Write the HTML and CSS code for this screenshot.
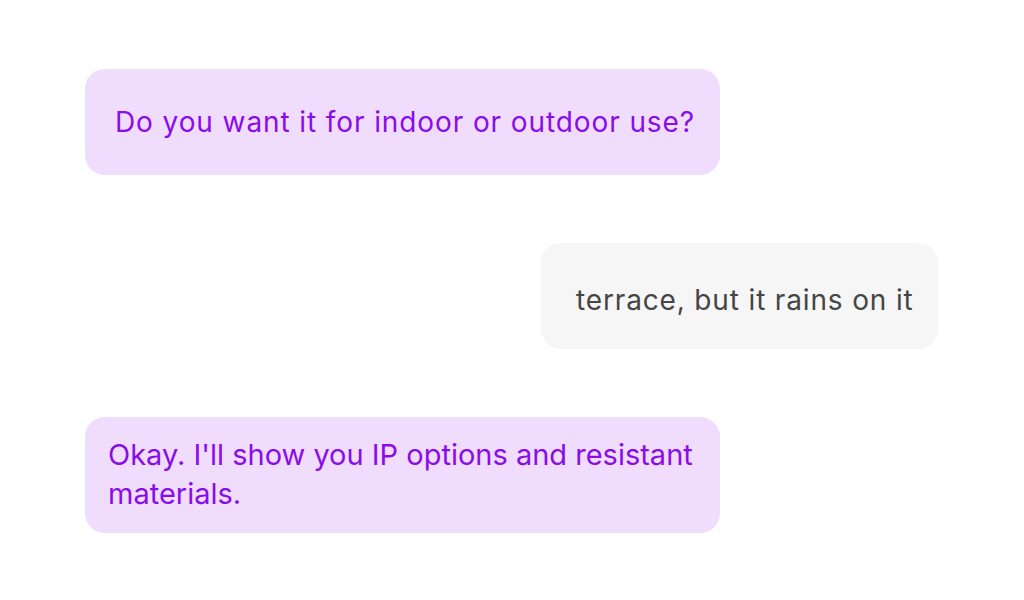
FILE: index.html
```html
<!DOCTYPE html>
<html lang="en">
<head>
<meta charset="utf-8">
<title>Chat</title>
<link rel="stylesheet" href="styles.css">
</head>
<body>
<main class="chat">
  <div class="bubble bubble-bot bubble-q">Do you want it for indoor or outdoor use?</div>
  <div class="bubble bubble-user">terrace, but it rains on it</div>
  <div class="bubble bubble-bot bubble-a">Okay. I'll show you IP options and resistant materials.</div>
</main>
</body>
</html>
```

FILE: styles.css
```css
html, body {
  margin: 0;
  padding: 0;
  background: #ffffff;
}

.chat {
  width: 1024px;
  height: 600px;
  box-sizing: border-box;
  padding: 69px 86px 0 85px;
  display: flex;
  flex-direction: column;
  gap: 68px;
  font-family: "Inter", "DejaVu Sans", sans-serif;
}

.bubble {
  box-sizing: border-box;
  border-radius: 20px;
}

.bubble-bot {
  align-self: flex-start;
  width: 635px;
  background: #f0dcfd;
  color: #8a0ce8;
}

.bubble-user {
  align-self: flex-end;
  width: 397px;
  height: 106px;
  background: #f6f6f6;
  color: #454545;
  font-size: 28px;
  letter-spacing: 0.85px;
  line-height: 106px;
  padding: 4px 0 0 35px;
}

.bubble-q {
  height: 106px;
  font-size: 28px;
  letter-spacing: 0.9px;
  line-height: 106px;
  padding-left: 30px;
}

.bubble-a {
  height: 116px;
  font-size: 29px;
  line-height: 39px;
  padding: 18px 20px 0 23px;
}
```
